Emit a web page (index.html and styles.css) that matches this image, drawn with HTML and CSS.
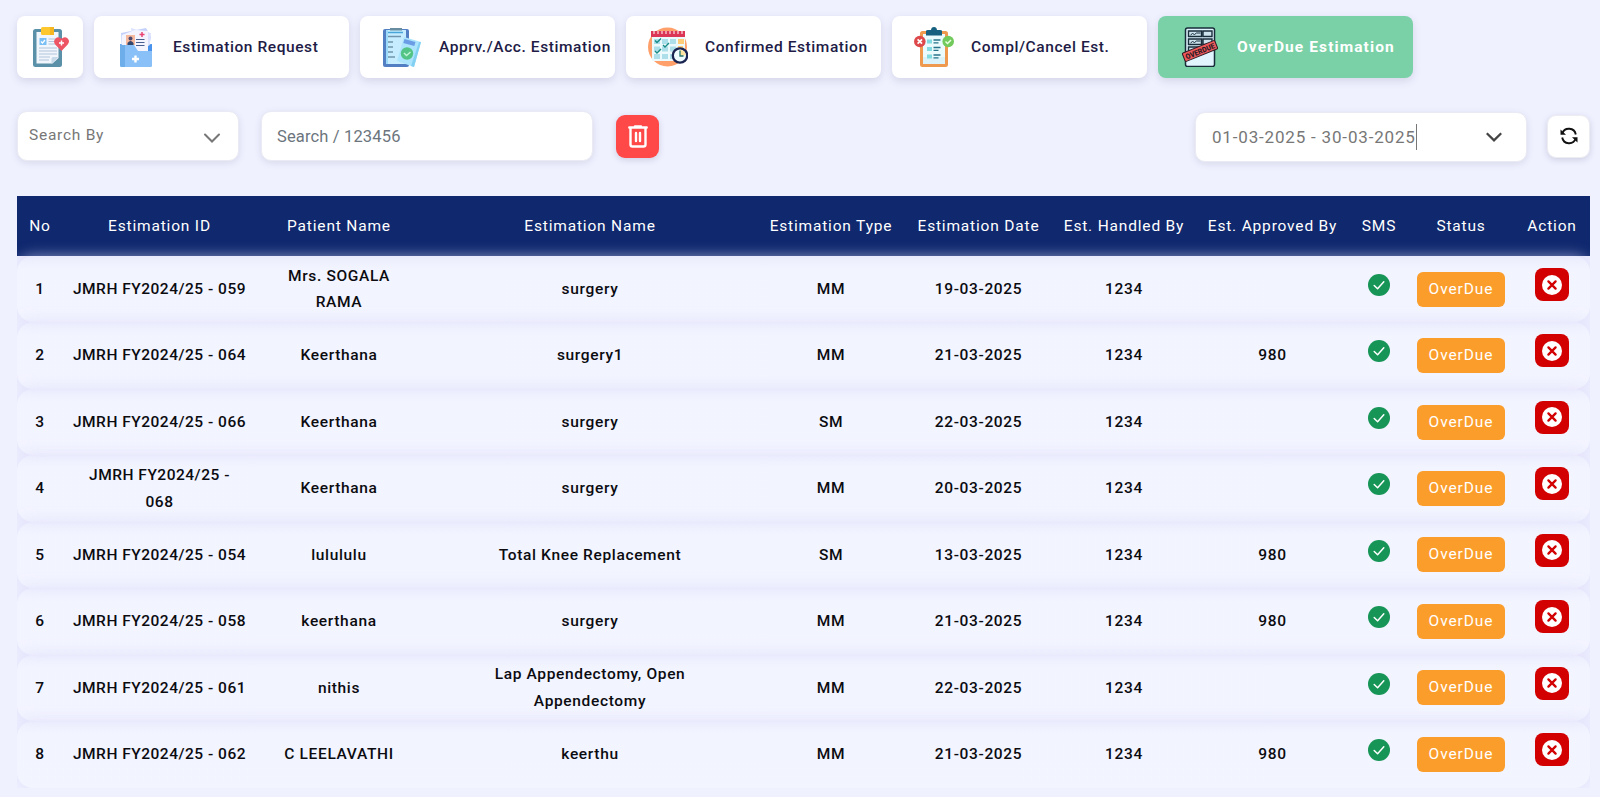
FILE: index.html
```html
<!DOCTYPE html>
<html lang="en">
<head>
<meta charset="utf-8">
<title>OverDue Estimation</title>
<link rel="stylesheet" href="styles.css">
</head>
<body>
<svg class="defs" width="0" height="0">
  <symbol id="ok" viewBox="0 0 22 22"><circle cx="11" cy="11" r="11" fill="#179557"/><path d="M6.2 11.5l3.4 3.3 6.2-7" fill="none" stroke="#fff" stroke-width="1.5" stroke-linecap="round" stroke-linejoin="round"/></symbol>
  <symbol id="cross" viewBox="0 0 20 20"><circle cx="10" cy="10" r="10" fill="#fff"/><path d="M6.4 6.4l7.2 7.2M13.6 6.4l-7.2 7.2" fill="none" stroke="#d20000" stroke-width="2.3" stroke-linecap="round"/></symbol>
</svg>
<nav class="tabs">
  <a class="tab tab-icon">
    <svg width="40" height="40" viewBox="0 0 40 40"><rect x="3" y="2" width="29" height="38" rx="2.5" fill="#5b91a8"/><path d="M6.500 5h22v26l-6 5.500h-16z" fill="#f1f6fc"/><path d="M28.500 30l-7 7v-5.500q0-1.500 1.500-1.500z" fill="#c6d9e8"/><rect x="11" y="0" width="13" height="8" rx="1.500" fill="#ffc72e"/><path d="M20 0h4v8h-4z" fill="#f5b622"/><rect x="9.500" y="11" width="7" height="7" fill="#79bff5"/><path d="M11 14.500l1.500 1.500 2.500-3" fill="none" stroke="#fff" stroke-width="1.200"/><path d="M18.500 12h7M18.500 14.500h7M18.500 17h7M9 21h18M9 24h18M9 27h18M9 30h11M9 33h10" stroke="#b4c4dc" stroke-width="1.200"/><path d="M31.500 24l-6.300-6.600q-2.400-3.400.3-6 3-2.700 6 .4 3-3.100 6.200-.4 2.700 2.900 0 6z" fill="#ed5565"/><path d="M31.500 13.500v5M29 16h5" stroke="#fff" stroke-width="1.500"/></svg>
  </a>
  <a class="tab">
    <svg width="40" height="40" viewBox="0 0 40 40"><path d="M4 17h32v21q0 2-2 2H6q-2 0-2-2z" fill="#68a9ed"/><path d="M5 6l25-5 5 9-3 14H6z" fill="#c5d1fa"/><path d="M15 1l10 3 10 2-2 17H18z" fill="#dae2ff"/><path d="M6 8l13-5 13 1v20H6z" fill="#f4f4ff"/><rect x="10" y="8" width="9" height="10" fill="#f7b99d"/><circle cx="14.500" cy="11.500" r="2" fill="#4b4970"/><path d="M11.500 18v-2q3-4 6 0v2z" fill="#33466e"/><path d="M26 5v5M23.500 7.500h5" stroke="#e94473" stroke-width="1.500"/><path d="M20 12.500h8.500M20 15.500h8.500M20 18.500h8.500" stroke="#475e91" stroke-width="1"/><path d="M4 18h14l4 6h14v14q0 2-2 2H6q-2 0-2-2z" fill="#88c0f7"/><path d="M4 18h5v22H6q-2 0-2-2z" fill="#6cadea"/><path d="M36 17l-4 2v5h4z" fill="#4a93ed"/><path d="M19.500 28.500v7M16 32h7" stroke="#fff" stroke-width="2.400"/></svg>
    <span>Estimation Request</span>
  </a>
  <a class="tab">
    <svg width="40" height="40" viewBox="0 0 40 40"><rect x="1" y="2" width="26" height="38" rx="2" fill="#527fc3"/><path d="M4 3h20v34H4z" fill="#c5edff"/><path d="M4 3h2v34H4z" fill="#9ddafa"/><path d="M8 3.500V1h12v2.500z" fill="#688da1"/><path d="M6 5.500h15" stroke="#49a5d9" stroke-width="1.500"/><path d="M6 9.500h13M6 15h5M6 20h5M6 25h5M6 30h7" stroke="#7095ac" stroke-width="1.500"/><path d="M22 10l17 5-7 25-17-6z" fill="#abe4fc"/><path d="M37 15l2 0-7 25-3-1z" fill="#83d0f2"/><path d="M22.500 12l11 3-1.200 4-11-3z" fill="#6b9de7"/><circle cx="25" cy="26.500" r="6.200" fill="#53c486"/><path d="M22 26l2.500 2.500 4-3.500" fill="none" stroke="#bdf4d3" stroke-width="1.500"/></svg>
    <span>Apprv./Acc. Estimation</span>
  </a>
  <a class="tab">
    <svg width="40" height="40" viewBox="0 0 40 40"><circle cx="19.500" cy="20" r="19.500" fill="#ffa06b"/><rect x="4" y="8" width="33" height="26" fill="#edfafd"/><rect x="3" y="4" width="34" height="6" fill="#db3655"/><path d="M6 4v3M10 4v3M14 4v3M18 4v3M22 4v3M26 4v3M30 4v3M34 4v3" stroke="#fff" stroke-width="1"/><path d="M6 12h6v5H6zM14 12h6v5h-6zM22 12h6v5h-6zM6 19.500h6v5H6zM14 19.500h6v5h-6zM22 19.500h6v5h-6zM6 27h6v5H6zM14 27h6v5h-6zM22 27h4v5h-4z" fill="#addfea"/><path d="M30 12h6v5h-6zM30 19h5v4h-5z" fill="#ffcc79"/><path d="M7 13.500l2 2 4-4M15 18l2 2 4-4M7 24l2 2 4-4" fill="none" stroke="#178b86" stroke-width="1.400"/><circle cx="32" cy="28.500" r="7.200" fill="#eefbff" stroke="#192451" stroke-width="2.300"/><path d="M32 22.800a5.700 5.700 0 0 1 5.700 5.700H32z" fill="#ffe4a0"/><path d="M32 23.500v5.500h3.500" stroke="#24766e" stroke-width="1.300" fill="none"/></svg>
    <span>Confirmed Estimation</span>
  </a>
  <a class="tab">
    <svg width="40" height="40" viewBox="0 0 40 40"><rect x="7.500" y="5.500" width="25" height="33" rx="1" fill="#eafafd" stroke="#ee994e" stroke-width="3"/><path d="M9 30h22v7H9z" fill="#dbf2f8"/><path d="M12 8.500V4q0-1 2-1h3q.3-3 3-3t3 3h3q2 0 2 1v4.500z" fill="#176080"/><path d="M13 12.500h5v4h-5zM13 20h5v4h-5zM13 27.500h5v4h-5z" fill="#82dbe0"/><path d="M19.500 13h7M19.500 15.800h5M19.500 20.500h7M19.500 23.300h5M19.500 28h7M19.500 30.800h5" stroke="#27748b" stroke-width="1.300"/><circle cx="5.800" cy="14.500" r="5.800" fill="#dd494b"/><path d="M3.600 12.300l4.400 4.400M8 12.300l-4.400 4.400" stroke="#fff" stroke-width="1.700"/><circle cx="34.200" cy="14.500" r="5.800" fill="#72ca5c"/><path d="M31.500 14.500l2 2 3.500-3.500" fill="none" stroke="#e7ffe0" stroke-width="1.500"/></svg>
    <span>Compl/Cancel Est.</span>
  </a>
  <a class="tab active">
    <svg width="40" height="40" viewBox="0 0 40 40"><rect x="5.500" y="1" width="29" height="38.500" rx="2" fill="#e1f5fe" stroke="#172d3a" stroke-width="1.500"/><path d="M8.500 4h13v5.500h-13zM8.500 12h13v5.500h-13zM23 4h9v5.500h-9zM23 12h9v5.500h-9zM8.500 20h13v6h-13z" fill="#cce2ed" stroke="#172d3a" stroke-width="1.400"/><path d="M10.500 8l2-1.500 2 1 2-1.500h4M10.500 16l2-1.500 2 1 2-1.500h4" fill="none" stroke="#172d3a" stroke-width="1"/><g transform="rotate(-22 20 24)"><rect x="2.500" y="19.500" width="35" height="9" rx="1" fill="#f0595c" stroke="#301c24" stroke-width="1"/><text x="20" y="26.900" text-anchor="middle" textLength="31" lengthAdjust="spacingAndGlyphs" class="stamp">OVERDUE</text></g></svg>
    <span>OverDue Estimation</span>
  </a>
</nav>

<section class="filters">
  <div class="field select"><span>Search By</span><svg width="16" height="10" viewBox="0 0 16 10"><path d="M1 1.500l7 7 7-7" fill="none" stroke="#777" stroke-width="2" stroke-linecap="round"/></svg></div>
  <div class="field search">Search / 123456</div>
  <button class="square trash"><svg width="20" height="23" viewBox="0 0 20 23"><path d="M2.500 3v16.500q0 2 2 2h11q2 0 2-2V3" fill="none" stroke="#fff" stroke-width="2.400"/><path d="M1.300 2.500h17.400M7 1.500h6M8 8v8M12 8v8" fill="none" stroke="#fff" stroke-width="2.400" stroke-linecap="round"/></svg></button>
  <div class="field range"><span class="dates">01-03-2025 - 30-03-2025</span><svg width="16" height="10" viewBox="0 0 16 10"><path d="M.8 1.200L8 8.300l7.200-7.100" fill="none" stroke="#444" stroke-width="2.300"/></svg></div>
  <button class="square refresh"><svg width="18" height="18" viewBox="0 0 18 18"><path d="M2.300 6.500A7 7 0 0 1 15.800 7.500M15.700 11.500A7 7 0 0 1 2.200 10.500" fill="none" stroke="#111" stroke-width="1.900"/><path d="M.5 2.500v5.200h5.500zM17.500 15.500v-5.200H12z" fill="#111"/></svg></button>
</section>

<main class="table">
  <div class="row head"><span>No</span><span>Estimation ID</span><span>Patient Name</span><span>Estimation Name</span><span>Estimation Type</span><span>Estimation Date</span><span>Est. Handled By</span><span>Est. Approved By</span><span>SMS</span><span>Status</span><span>Action</span></div>
  <div class="row"><span>1</span><span class="id">JMRH FY2024/25 - 059</span><span>Mrs. SOGALA<br>RAMA</span><span>surgery</span><span>MM</span><span>19-03-2025</span><span>1234</span><span></span><span class="ic"><svg width="22" height="22"><use href="#ok"/></svg></span><span><b class="badge">OverDue</b></span><span class="ic"><button class="del"><svg width="20" height="20"><use href="#cross"/></svg></button></span></div>
  <div class="row"><span>2</span><span class="id">JMRH FY2024/25 - 064</span><span>Keerthana</span><span>surgery1</span><span>MM</span><span>21-03-2025</span><span>1234</span><span>980</span><span class="ic"><svg width="22" height="22"><use href="#ok"/></svg></span><span><b class="badge">OverDue</b></span><span class="ic"><button class="del"><svg width="20" height="20"><use href="#cross"/></svg></button></span></div>
  <div class="row"><span>3</span><span class="id">JMRH FY2024/25 - 066</span><span>Keerthana</span><span>surgery</span><span>SM</span><span>22-03-2025</span><span>1234</span><span></span><span class="ic"><svg width="22" height="22"><use href="#ok"/></svg></span><span><b class="badge">OverDue</b></span><span class="ic"><button class="del"><svg width="20" height="20"><use href="#cross"/></svg></button></span></div>
  <div class="row"><span>4</span><span class="id">JMRH FY2024/25 -<br>068</span><span>Keerthana</span><span>surgery</span><span>MM</span><span>20-03-2025</span><span>1234</span><span></span><span class="ic"><svg width="22" height="22"><use href="#ok"/></svg></span><span><b class="badge">OverDue</b></span><span class="ic"><button class="del"><svg width="20" height="20"><use href="#cross"/></svg></button></span></div>
  <div class="row"><span>5</span><span class="id">JMRH FY2024/25 - 054</span><span>lulululu</span><span>Total Knee Replacement</span><span>SM</span><span>13-03-2025</span><span>1234</span><span>980</span><span class="ic"><svg width="22" height="22"><use href="#ok"/></svg></span><span><b class="badge">OverDue</b></span><span class="ic"><button class="del"><svg width="20" height="20"><use href="#cross"/></svg></button></span></div>
  <div class="row"><span>6</span><span class="id">JMRH FY2024/25 - 058</span><span>keerthana</span><span>surgery</span><span>MM</span><span>21-03-2025</span><span>1234</span><span>980</span><span class="ic"><svg width="22" height="22"><use href="#ok"/></svg></span><span><b class="badge">OverDue</b></span><span class="ic"><button class="del"><svg width="20" height="20"><use href="#cross"/></svg></button></span></div>
  <div class="row"><span>7</span><span class="id">JMRH FY2024/25 - 061</span><span>nithis</span><span>Lap Appendectomy, Open<br>Appendectomy</span><span>MM</span><span>22-03-2025</span><span>1234</span><span></span><span class="ic"><svg width="22" height="22"><use href="#ok"/></svg></span><span><b class="badge">OverDue</b></span><span class="ic"><button class="del"><svg width="20" height="20"><use href="#cross"/></svg></button></span></div>
  <div class="row"><span>8</span><span class="id">JMRH FY2024/25 - 062</span><span>C LEELAVATHI</span><span>keerthu</span><span>MM</span><span>21-03-2025</span><span>1234</span><span>980</span><span class="ic"><svg width="22" height="22"><use href="#ok"/></svg></span><span><b class="badge">OverDue</b></span><span class="ic"><button class="del"><svg width="20" height="20"><use href="#cross"/></svg></button></span></div>
</main>
</body>
</html>
```
FILE: styles.css
```css
* { box-sizing: border-box; }
body { margin: 0; height: 797px; overflow: hidden; background: #eff1ff; padding: 16px 10px 0 17px; font: 500 15.5px "Roboto", "Open Sans", sans-serif; letter-spacing: .65px; color: #0b0b10; }
svg { display: block; flex: none; }
.defs { position: absolute; }
button { border: 0; padding: 0; display: flex; align-items: center; justify-content: center; }
.tabs { display: flex; gap: 11px; height: 62px; }
.tab { width: 255px; padding-left: 22px; display: flex; align-items: center; gap: 17px; background: #fff; border-radius: 8px; box-shadow: 0 3px 8px rgba(60, 60, 100, .15); color: #211b46; white-space: nowrap; letter-spacing: .58px; }
.tab-icon { width: 66px; padding-left: 13px; }
.active { background: #7ad1a7; color: #fff; font-weight: 700; letter-spacing: 1.1px; }
.stamp { font: 900 7.5px "Roboto", sans-serif; letter-spacing: 0; fill: #301c24; }
.filters { display: flex; align-items: center; margin-top: 33px; height: 50px; }
.field { height: 50px; background: #fff; border: 1px solid #e9eaf3; border-radius: 10px; box-shadow: 0 2px 7px rgba(60, 60, 100, .13); display: flex; align-items: center; justify-content: space-between; font-weight: 400; color: #777; white-space: nowrap; }
.select { width: 222px; padding: 0 18px 2px 11px; letter-spacing: .75px; }
.select svg { position: relative; top: 3px; }
.search { width: 332px; margin-left: 22px; padding-left: 15px; font-size: 16.5px; letter-spacing: .15px; color: #6c757d; }
.square { width: 43px; height: 43px; border-radius: 9px; box-shadow: 0 2px 6px rgba(60, 60, 100, .18); }
.trash { background: #ff4848; margin-left: 23px; }
.range { width: 332px; margin-left: auto; padding: 0 24px 0 16px; font-size: 17px; position: relative; top: 1px; }
.dates { border-right: 1px solid #777; line-height: 26px; letter-spacing: .82px; }
.refresh { background: #fff; margin: 0 0 0 20px; border: 1px solid #ececf3; }
.table { margin-top: 35px; width: 1573px; height: 592px; overflow: hidden; }
.row { display: grid; grid-template-columns: 46px 193px 166px 336px 146px 149px 142px 155px 58px 106px 76px; height: 66.45px; align-items: center; justify-items: center; text-align: center; line-height: 26.5px; border-radius: 16px; background: linear-gradient(rgba(243, 245, 255, .05), rgba(243, 245, 255, .8) 14px); box-shadow: 0 0 14px rgba(216, 212, 246, .6); white-space: nowrap; }
.head { height: 60px; background: #0f286e; color: #fff; border-radius: 0; box-shadow: 0 0 14px rgba(216, 212, 246, .6); font-weight: 400; letter-spacing: .82px; }
.id { letter-spacing: .5px; }
.ic { align-self: start; margin-top: 18px; }
.badge { display: block; width: 88px; height: 35px; border-radius: 6px; background: #fb9d2b; color: #fff; font-weight: 400; letter-spacing: .9px; line-height: 34px; }
.del { width: 34px; height: 33px; margin-top: -6px; border-radius: 8px; background: #d20000; }
```
